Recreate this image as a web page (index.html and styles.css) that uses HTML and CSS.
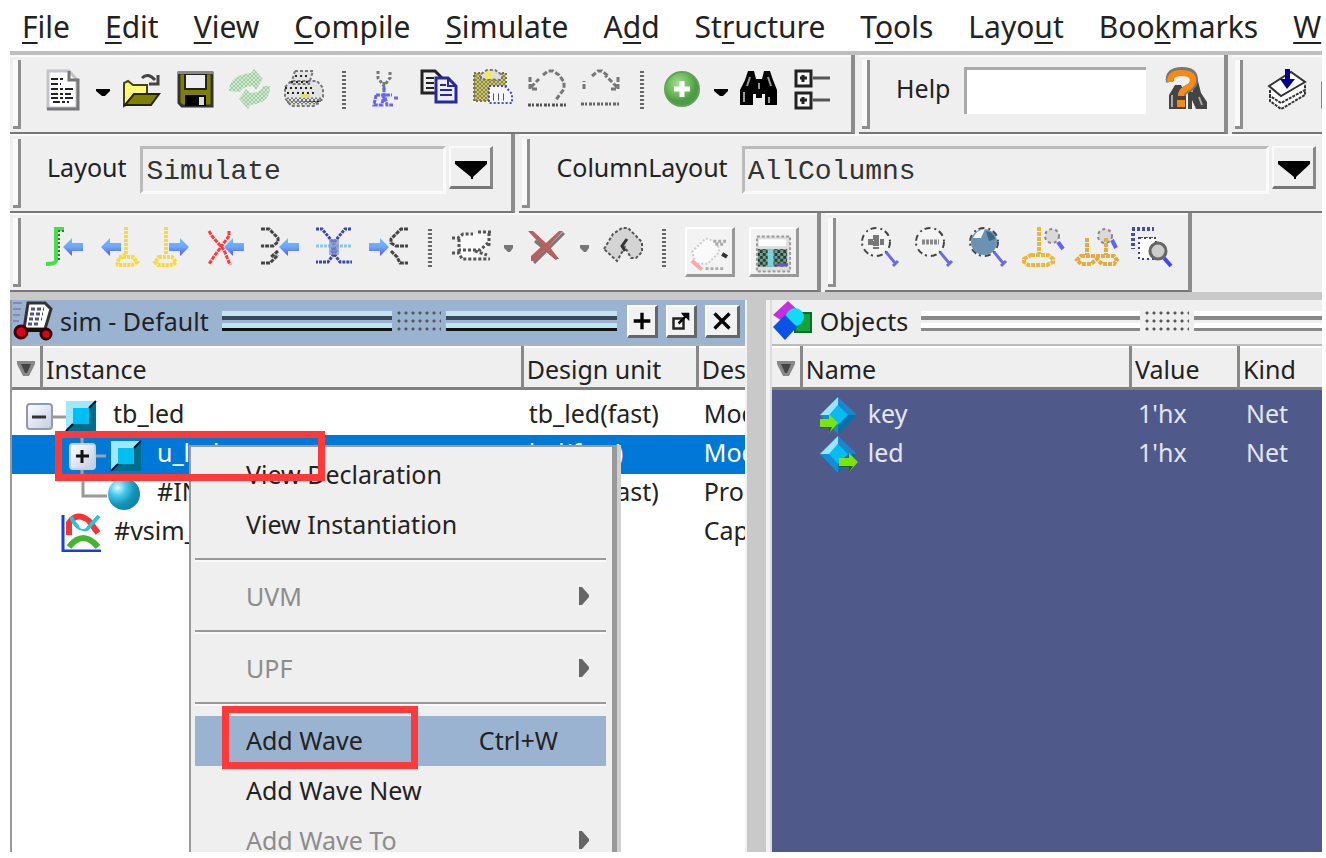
FILE: index.html
```html
<!DOCTYPE html>
<html lang="en">
<head>
<meta charset="utf-8">
<title>Simulator</title>
<link rel="stylesheet" href="styles.css">
</head>
<body>
<svg class="defs" aria-hidden="true">
  <defs>
    <pattern id="dither" width="4" height="4" patternUnits="userSpaceOnUse"><path d="M0 0h2v2H0zM2 2h2v2H2z" fill="#777"/></pattern>
    <pattern id="ditherOlive" width="4" height="4" patternUnits="userSpaceOnUse"><path fill="#c9c36a" d="M0 0h4v4H0z"/><path d="M0 0h2v2H0zM2 2h2v2H2z" fill="#8d8a4a"/></pattern>
    <pattern id="ditherGreen" width="4" height="4" patternUnits="userSpaceOnUse"><path fill="#cfe6cf" d="M0 0h4v4H0z"/><path d="M0 0h2v2H0zM2 2h2v2H2z" fill="#a4cfa6"/></pattern>
    <pattern id="ditherTeal" width="6" height="6" patternUnits="userSpaceOnUse"><path fill="#6fa08a" d="M0 0h6v6H0z"/><path d="M0 0h3v3H0zM3 3h3v3H3z" fill="#2c3b3c"/></pattern>
    <linearGradient id="blueArrow" x2="0" y2="1"><stop offset="0" stop-color="#6fc0f7"/><stop offset=".5" stop-color="#6ba6fb"/><stop offset="1" stop-color="#5a50f5"/></linearGradient>
    <radialGradient id="greenBall" cx=".4" cy=".35"><stop offset="0" stop-color="#a9dc98"/><stop offset=".7" stop-color="#67b957"/><stop offset="1" stop-color="#4f9a48"/></radialGradient>
    <radialGradient id="ball" cx=".3" cy=".3" r=".75"><stop offset="0" stop-color="#e2fbff"/><stop offset=".35" stop-color="#45c8ee"/><stop offset=".7" stop-color="#1593b8"/><stop offset="1" stop-color="#0e86a8"/></radialGradient>
    <linearGradient id="box" x2="1" y2="1"><stop offset="0" stop-color="#fff"/><stop offset="1" stop-color="#c3cbe0"/></linearGradient>
    <g id="arrowLeft"><path d="M0 10 9 1v5h11v8H9v5z" fill="url(#blueArrow)"/></g>
    <g id="arrowRight"><path d="M20 10 11 1v5H0v8h11v5z" fill="url(#blueArrow)"/></g>
    <g id="cube"><path fill="#9fe8f8" d="M0 0h30l-7 7H7v16l-7 7z"/><path fill="#006d8c" d="M30 0v30H0l7-7h16V7z"/><path fill="#00bff2" d="M7 7h16v16H7z"/><path d="M30 0l-7 7M7 23l-7 7" stroke="#013" stroke-width="2"/></g>
    <g id="gem"><path fill="#98e6fa" d="M18 0 0 18l10 0 8-10z"/><path fill="#1b86cf" d="M18 0l19 18H27L18 8z"/><path fill="#0a6fae" d="M37 18 18 37V27l9-9z"/><path fill="#128ed4" d="M0 18l18 19V27l-8-9z"/><path fill="#05bdf3" d="M18 8l10 10-10 10L9 18z"/></g>
    <g id="lens"><circle cx="16" cy="15" r="14" fill="#f4f4f4" stroke="#444" stroke-width="2" stroke-dasharray="6 4 2 3"/><path d="m26 25 9 11m-2 3 5-5" stroke="#6d6dd8" stroke-width="3" fill="none"/></g>
  </defs>
</svg>

<div class="app">
  <nav class="menubar" aria-label="Main">
    <a href="#"><u>F</u>ile</a><a href="#"><u>E</u>dit</a><a href="#"><u>V</u>iew</a><a href="#"><u>C</u>ompile</a><a href="#"><u>S</u>imulate</a><a href="#">A<u>d</u>d</a><a href="#">St<u>r</u>ucture</a><a href="#">T<u>o</u>ols</a><a href="#">Layo<u>u</u>t</a><a href="#">Boo<u>k</u>marks</a><a href="#"><u>W</u>indow</a>
  </nav>

  <div class="bars">
    <div class="bar-row">
      <section class="bar">
        <i class="grip"></i>
        <div class="tools">
          <button class="tool" aria-label="New"><svg viewBox="0 0 40 42"><path fill="#fff" stroke="#c4c2cc" stroke-width="3" d="M3 2h21l8 9v28H3z"/><path fill="none" stroke="#777" stroke-width="3" d="M24 2v9h9v29H2"/><path stroke="#222" stroke-width="2" stroke-dasharray="7 2 3 2 9 2" d="M6 10h13M6 15h10M6 20h22M6 25h20M6 29h22M8 33h16"/></svg></button>
          <button class="drop" aria-label="New options"><svg viewBox="0 0 14 42"><path d="M0 20h14v2l-5 5H6l-6-5z"/></svg></button>
          <button class="tool" aria-label="Open"><svg viewBox="0 0 40 42"><path d="M21 9q6-6 13 2m3-5v9h-9" fill="none" stroke="#444" stroke-width="3"/><path fill="#fff977" stroke="#444416" stroke-width="2" d="M3 37V14l4-2 5 4h14v8z"/><path fill="#808000" stroke="#222200" stroke-width="2" d="M4 36l9-11h25l-8 11z"/></svg></button>
          <button class="tool" aria-label="Save"><svg viewBox="0 0 40 42"><path fill="#808000" stroke="#333" stroke-width="3" d="M4 4h33v33H7l-3-3z"/><path fill="#efefef" stroke="#222" stroke-width="2" d="M10 5h21v15H10z"/><path d="M10 26h21v11H10z"/><path fill="#ddd" d="M24 28h5v8h-5z"/><path fill="#888" d="M3 2h35v3H3z"/></svg></button>
          <button class="tool" aria-label="Reload"><svg viewBox="0 0 40 42"><path fill="url(#ditherGreen)" d="M0 22Q0 6 22 4l3-4 9 10-7 11-3-4q-10 0-13 6zM41 17q1 17-20 19l-2 4-9-10 7-10 4 4q11 0 13-7z"/></svg></button>
          <button class="tool" aria-label="Print"><svg viewBox="0 0 40 42"><path fill="#e3e3e3" stroke="#777" stroke-width="2" stroke-dasharray="3 2" d="M12 2h18l-4 13H8zM2 18l6-6h26l6 7v9l-8 9H8l-6-8z"/><path stroke="#222" stroke-width="2" stroke-dasharray="2 3" d="M2 19h30M4 24h28M8 13h18M12 7h14"/><path stroke="url(#dither)" stroke-width="7" d="M4 32h32l0 1"/><path fill="#e3dc75" d="M18 25h9v4h-9z"/></svg></button>
          <i class="sep"></i>
          <button class="tool" aria-label="Cut"><svg viewBox="0 0 40 42"><path d="M13 2v7l6 8 6-8V2M19 13v8" fill="none" stroke="#777" stroke-width="3" stroke-dasharray="3 2"/><path d="M19 19v14M11 26h16M11 26l-2 10h8l2-12 3 12h6M29 29h4" fill="none" stroke="#6666f5" stroke-width="3" stroke-dasharray="4 1"/></svg></button>
          <button class="tool" aria-label="Copy"><svg viewBox="0 0 40 42"><path fill="#eee" stroke="#222" stroke-width="3" d="M3 2h13l7 7v15H3z"/><path stroke="#222" stroke-width="2" d="M7 9h8M7 14h8M7 19h8"/><path fill="#eef" stroke="#2828a0" stroke-width="3" d="M17 9h12l8 8v16H17z"/><path fill="none" stroke="#2828a0" stroke-width="2" d="M29 9v8h8M21 16h6M21 21h12M21 26h12"/></svg></button>
          <button class="tool" aria-label="Paste"><svg viewBox="0 0 40 42"><path fill="url(#ditherOlive)" stroke="#77744a" stroke-width="2" stroke-dasharray="2 2" d="M1 4h32v28H1z"/><path fill="#ddd" stroke="#777" stroke-width="2" stroke-dasharray="3 2" d="M8 10V5l6-4h8l7 5v5z"/><path fill="#f3ec4e" d="M12 3h6v7h-6z"/><path fill="#f6f6ff" stroke="#4a4ab8" stroke-width="2" stroke-dasharray="2 2" d="M16 17h16l7 8v9H16z"/><path stroke="#555" stroke-width="7" stroke-dasharray="1 4" d="M20 28h14"/></svg></button>
          <button class="tool" aria-label="Undo"><svg viewBox="0 0 40 42"><path d="M3 8v12h8M4 18l8-8M16 6l5-4h5l6 4 5 7v7l-9 12" fill="none" stroke="#777" stroke-width="3" stroke-dasharray="5 2"/><path d="M1 36h38" stroke="#555" stroke-width="3" stroke-dasharray="3 1 2 2"/></svg></button>
          <button class="tool" aria-label="Redo"><svg viewBox="0 0 40 42"><path d="M37 8v12h-9M36 18 24 6M3 20v-8M11 7l6-5h4l6 5" fill="none" stroke="#777" stroke-width="3" stroke-dasharray="5 2"/><path d="M0 35h40" stroke="#666" stroke-width="3" stroke-dasharray="3 1 2 2"/></svg></button>
          <i class="sep"></i>
          <button class="tool" aria-label="Add"><svg viewBox="0 0 40 42"><circle cx="19" cy="20" r="17" fill="url(#greenBall)" stroke="#5fa558" stroke-width="2"/><path stroke="#fff" stroke-width="5" d="M11 20h16M19 12v16"/></svg></button>
          <button class="drop" aria-label="Add options"><svg viewBox="0 0 14 42"><path d="M0 20h14v2l-5 5H6l-6-5z"/></svg></button>
          <button class="tool" aria-label="Find"><svg viewBox="0 0 40 42"><path d="M9 2h6l2 8h6l2-8h6l3 9 4 10v15H26V25h-3v4h-6v-4h-3v11H1V21l5-10z"/><path stroke="#999" stroke-width="2" d="M11 8l-3 9M5 23v10M29 8l3 9M30 28v6M20 14v6"/></svg></button>
          <button class="tool" aria-label="Expand tree"><svg viewBox="0 0 40 42"><g fill="#f6f6f6" stroke="#222" stroke-width="3"><path d="M3 2h15v15H3z"/><path d="M3 24h15v15H3z"/></g><path stroke="#222" stroke-width="3" d="M7 9h7M10 6v7M7 31h7M10 28v7"/><path stroke="#555" stroke-width="3" d="M20 9h17M20 31h17"/></svg></button>
        </div>
      </section>
      <section class="bar">
        <i class="grip"></i>
        <div class="fields">
          <label for="help">Help</label>
          <input id="help" class="help" type="text">
          <button class="tool" aria-label="Search help"><svg viewBox="0 0 40 42"><path fill="#444" d="M3 40V26l6-10h6l5 10v14zM22 40V24l3-16h6l4 16 6 9v7H30l-4-9v9z"/><path stroke="#aaa" stroke-width="2" d="M6 26v12M26 15v8M33 28l3 8"/><path d="M4 13q-2-11 12-11 12 0 12 9 0 6-7 9-5 2-5 7" fill="none" stroke="#777" stroke-width="8"/><path d="M4 13q0-9 11-9 12 0 12 7 0 5-6 8-6 3-6 8" fill="none" stroke="#f78b12" stroke-width="6"/><path fill="#f78b12" d="M11 31h8v7h-8z"/></svg></button>
        </div>
      </section>
      <section class="bar bar-last">
        <i class="grip"></i>
        <div class="tools">
          <button class="tool" aria-label="Compile"><svg viewBox="0 0 40 42"><path fill="#fff" stroke="#333" stroke-width="2" stroke-dasharray="3 1" d="M3 26v6l11 8 24-14v-5M3 21v6l11 7 24-13v-6"/><path fill="#fff" stroke="#333" stroke-width="2" d="M2 17 24 3l14 10-24 14z"/><path fill="#000090" d="M18 0h5v10h5l-8 10-7-10h5z"/></svg></button>
          <button class="tool" aria-label="Compile all"><svg viewBox="0 0 40 42"><path fill="#6060c8" d="M4 0h12v10H4z"/><path fill="#fff" stroke="#222" stroke-width="3" d="M2 14h30v24H2z"/></svg></button>
        </div>
      </section>
    </div>

    <div class="bar-row">
      <section class="bar">
        <i class="grip"></i>
        <div class="fields">
          <label for="layout">Layout</label>
          <select id="layout" class="combo"><option>Simulate</option></select>
          <button class="open" aria-label="Choose layout"><svg viewBox="0 0 34 20"><path d="M1 1h32v3L19 17v2h-2v-2L1 4z"/></svg></button>
        </div>
      </section>
      <section class="bar bar-last">
        <i class="grip"></i>
        <div class="fields fields-wide">
          <label for="columns">ColumnLayout</label>
          <select id="columns" class="combo combo-wide"><option>AllColumns</option></select>
          <button class="open" aria-label="Choose column layout"><svg viewBox="0 0 34 20"><path d="M1 1h32v3L19 17v2h-2v-2L1 4z"/></svg></button>
        </div>
      </section>
    </div>

    <div class="bar-row">
      <section class="bar">
        <i class="grip"></i>
        <div class="tools">
          <button class="tool" aria-label="Add edge"><svg viewBox="0 0 40 42"><path d="M19 2h-8v32q0 3-10 3" fill="none" stroke="#44e044" stroke-width="4"/><path d="M19 4h-5v30" fill="none" stroke="#2c7a35" stroke-width="2" stroke-dasharray="2 2"/><use href="#arrowLeft" x="18" y="10"/></svg></button>
          <button class="tool" aria-label="Previous edge"><svg viewBox="0 0 40 42"><use href="#arrowLeft" x="2" y="10"/><path d="M27 0v29M20 30h14l4 5-5 3H19q-3-4 8-11" fill="none" stroke="#f8d93e" stroke-width="4" stroke-dasharray="3 1"/></svg></button>
          <button class="tool" aria-label="Next edge"><svg viewBox="0 0 40 42"><use href="#arrowRight" x="16" y="10"/><path d="M13 0v28M6 30h13l4 5-3 3H5l-3-3z" fill="none" stroke="#f8d93e" stroke-width="4" stroke-dasharray="3 1"/></svg></button>
          <button class="tool" aria-label="Delete edge"><svg viewBox="0 0 40 42"><path d="M2 4l3 5 12 14 6 15M22 4v5L8 28 2 37" fill="none" stroke="#f93c3c" stroke-width="3" stroke-dasharray="4 1"/><use href="#arrowLeft" x="17" y="10"/></svg></button>
          <button class="tool" aria-label="Join signals"><svg viewBox="0 0 40 42"><path d="M0 2h8l9 9v4l-5 4H0M17 24l-7 6M0 36h9l8-8" fill="none" stroke="#444" stroke-width="3" stroke-dasharray="4 1"/><use href="#arrowLeft" x="18" y="10"/></svg></button>
          <button class="tool" aria-label="Cross signals"><svg viewBox="0 0 40 42"><path d="M1 2h6l10 12 4 10-8 11H1M36 2h-6L20 14l-3 10 8 11h12" fill="none" stroke="#3a46a8" stroke-width="3" stroke-dasharray="3 1"/><path d="M1 19h36" stroke="#8cc7e8" stroke-width="3" stroke-dasharray="3 1"/><path fill="#8090cc" d="M14 12h10v16H14z" opacity=".7"/></svg></button>
          <button class="tool" aria-label="Split signals"><svg viewBox="0 0 40 42"><use href="#arrowRight" x="0" y="10"/><path d="M39 2h-7L22 12v4l5 3h12M22 24l6 6 3 6h8" fill="none" stroke="#444" stroke-width="3" stroke-dasharray="4 1"/></svg></button>
          <i class="sep"></i>
          <button class="tool" aria-label="Edit wave"><svg viewBox="0 0 40 42"><path fill="#fafafa" d="M10 7 36 6v14L26 32H10z"/><path d="M1 11h6l5-4h10M27 5h13M8 12v11h21l8-7M1 26h7l3 6h28M38 6v14M24 24l12 4" fill="none" stroke="#555" stroke-width="3" stroke-dasharray="3 2"/></svg></button>
          <button class="drop" aria-label="Edit options"><svg viewBox="0 0 14 42"><path fill="#777" d="M2 18h9v3l-3 4H6l-4-4z"/></svg></button>
          <button class="tool" aria-label="Delete"><svg viewBox="0 0 40 42"><path d="M37 6 7 36M8 14l22 18" fill="none" stroke="#777" stroke-width="3"/><path fill="#b86060" d="M1 4h5l13 12L32 4h4L22 19l10 13h-4L18 23 8 34H4v-5l11-10z"/></svg></button>
          <button class="drop" aria-label="Delete options"><svg viewBox="0 0 14 42"><path fill="#777" d="M2 18h9v3l-3 4H6l-4-4z"/></svg></button>
          <button class="tool" aria-label="Refresh waves"><svg viewBox="0 0 40 42"><path fill="#d4d4d4" stroke="#555" stroke-width="2" stroke-dasharray="3 2" d="M1 22l9-15 9-6h6l7 7 7 7v10l-6 6h-5l-6-11-8 14z"/><path d="M24 12l-5 7 3 5" fill="none" stroke="#333" stroke-width="3"/></svg></button>
          <i class="sep"></i>
          <button class="tool raised" aria-label="Analyze"><svg viewBox="0 0 40 42"><path fill="#fafafa" stroke="#ccc" stroke-width="2" stroke-dasharray="2 2" d="M2 20 16 6l12 4 2 10-12 12H6z"/><path stroke="#f3aaaa" stroke-width="4" d="M2 29l10 9"/><path stroke="#aaa" stroke-width="3" stroke-dasharray="3 2" d="M24 9h14M16 37h20M26 12h8"/><path stroke="#333" stroke-width="4" d="M33 22l5 3"/></svg></button>
          <button class="tool raised" aria-label="Calculator"><svg viewBox="0 0 40 42"><path fill="#ddd" stroke="#999" stroke-width="2" stroke-dasharray="3 2" d="M3 4h34v36H3z"/><path fill="#fff" d="M5 7h28v7H5z"/><path fill="url(#ditherTeal)" d="M4 17h30v18H4z"/><path fill="#77d4de" d="M14 17h6v18h-6z"/><path stroke="#6a55c8" stroke-width="3" d="M23 33h12"/></svg></button>
        </div>
      </section>
      <section class="bar">
        <i class="grip"></i>
        <div class="tools">
          <button class="tool" aria-label="Zoom in"><svg viewBox="0 0 40 42"><use href="#lens"/><path d="M8 15h16M16 8v14" stroke="#777" stroke-width="6" stroke-dasharray="5 1"/></svg></button>
          <button class="tool" aria-label="Zoom out"><svg viewBox="0 0 40 42"><use href="#lens"/><path d="M8 15h17" stroke="#888" stroke-width="5" stroke-dasharray="3 1"/></svg></button>
          <button class="tool" aria-label="Zoom full"><svg viewBox="0 0 40 42"><use href="#lens"/><circle cx="16" cy="15" r="13" fill="#6c92b2"/><path fill="#eef6fa" d="M5 11q3-8 12-9l-4 9z"/><path fill="#37698d" d="M18 4q8 1 9 8l-6 2z"/></svg></button>
          <button class="tool" aria-label="Zoom cursor"><svg viewBox="0 0 40 42"><path d="M17 0v27M9 28h17l5 4v3l-6 3H6l-4-3v-3z" fill="none" stroke="#e9b93c" stroke-width="4" stroke-dasharray="4 1"/><circle cx="30" cy="9" r="7" fill="#d9d9d9" stroke="#888" stroke-width="2" stroke-dasharray="3 3"/><path d="M36 15l5 7" stroke="#6262f6" stroke-width="4"/></svg></button>
          <button class="tool" aria-label="Zoom between cursors"><svg viewBox="0 0 40 42"><circle cx="29" cy="9" r="7" fill="#d9d9d9" stroke="#888" stroke-width="2" stroke-dasharray="3 3"/><path d="M36 13l4 8" stroke="#6262f6" stroke-width="4"/><path d="M11 11v17M30 11v17M5 29h33l3 4-3 4H26l-5-5-6 5H5l-4-4z" fill="none" stroke="#e0ad3e" stroke-width="4" stroke-dasharray="4 1"/></svg></button>
          <button class="tool" aria-label="Zoom area"><svg viewBox="0 0 40 42"><path fill="none" stroke="#4a4aa8" stroke-width="4" stroke-dasharray="3 2" d="M2 2h22M3 6v16M10 12h16"/><path fill="#fff" stroke="#3b3ba0" stroke-width="2" stroke-dasharray="2 3" d="M9 11h17v21H9z"/><circle cx="28" cy="24" r="8" fill="#ccc" stroke="#666" stroke-width="3"/><path d="M34 31l7 8" stroke="#4545f5" stroke-width="4"/></svg></button>
        </div>
      </section>
    </div>
  </div>

  <main class="workspace">
    <section class="panel sim">
      <header class="title">
        <svg class="title-icon" viewBox="0 0 40 40"><path d="M1 2h9M1 8h8M1 14h7M1 20h6" stroke="#8d85b5" stroke-width="2"/><path fill="#fff" stroke="#333" stroke-width="3" d="M16 2h17l6 6-6 20H12z"/><path stroke="#55508a" stroke-width="3" stroke-dasharray="4 2" d="M19 8h13M18 13h13M17 18h13M16 23h12"/><path stroke="#111" stroke-width="4" d="M10 29h24"/><circle cx="9" cy="31" r="6" fill="#e00020" stroke="#400" stroke-width="3"/><circle cx="34" cy="33" r="5" fill="#e00020" stroke="#300" stroke-width="3"/></svg>
        <span class="title-text">sim - Default</span>
        <i class="rule"></i><i class="dots"></i><i class="rule"></i>
        <span class="title-buttons">
          <button aria-label="Maximize"><svg viewBox="0 0 24 24"><path d="M2 12h20M12 2v20" stroke="#000" stroke-width="4"/></svg></button>
          <button aria-label="Undock"><svg viewBox="0 0 24 24"><path d="M3 9h12v12H3z" fill="none" stroke="#222" stroke-width="3"/><path d="M9 15 19 5" stroke="#000" stroke-width="3"/><path d="M12 2h10v10l-4-4-4-3z"/></svg></button>
          <button class="close" aria-label="Close"><svg viewBox="0 0 24 24"><path d="M3 3l18 18M21 3 3 21" stroke="#000" stroke-width="4"/></svg></button>
        </span>
      </header>
      <table class="grid">
        <colgroup><col class="c-mark"><col><col class="c-unit"><col class="c-type"></colgroup>
        <thead><tr><th aria-label="Sort"><svg class="mark" viewBox="0 0 18 16"><path fill="#888" d="M0 0h18v3l-6 12H6L0 3z"/><path fill="#444" d="M4 3h10l-4 9H8z"/></svg></th><th>Instance</th><th>Design unit</th><th>Design unit type</th></tr></thead>
        <tbody>
          <tr><td colspan="2"><div class="node"><svg width="101" height="39" viewBox="0 0 101 39"><path d="M40 21h14" stroke="#999" stroke-width="3"/><rect x="15" y="8" width="25" height="25" rx="3" fill="url(#box)" stroke="#8f9bb5" stroke-width="2"/><path d="M20 21h14" stroke="#333" stroke-width="3"/><use href="#cube" x="54" y="5"/></svg>tb_led</div></td><td>tb_led(fast)</td><td>Module</td></tr>
          <tr class="selected"><td colspan="2"><div class="node"><svg width="145" height="39" viewBox="0 0 145 39"><path d="M84 21h10M70 0v39" stroke="#99a3ad" stroke-width="3"/><rect x="58" y="9" width="25" height="25" rx="3" fill="url(#box)" stroke="#c8d0e0" stroke-width="2"/><path d="M64 21h13M70 15v13" stroke="#111" stroke-width="3"/><use href="#cube" x="99" y="6"/></svg>u_led</div></td><td>led(fast)</td><td>Module</td></tr>
          <tr><td colspan="2"><div class="node"><svg width="145" height="39" viewBox="0 0 145 39"><path d="M71 0v22h24" fill="none" stroke="#999" stroke-width="3"/><circle cx="112" cy="20" r="16" fill="url(#ball)"/></svg>#INITIAL#30</div></td><td>tb_led(fast)</td><td>Process</td></tr>
          <tr><td colspan="2"><div class="node"><svg width="102" height="39" viewBox="0 0 102 39"><path fill="none" stroke="#1540e0" stroke-width="3" d="M51 2v36h38"/><path d="M57 22V10q8-12 20-2l9 12" fill="none" stroke="#f23535" stroke-width="6"/><path d="M59 4q6 14 16 12l12-13" fill="none" stroke="#28c4dc" stroke-width="4"/><circle cx="71" cy="12" r="4" fill="#fff"/><path d="M57 34q14-18 29 0" fill="none" stroke="#45b531" stroke-width="6"/></svg>#vsim_capacity#</div></td><td></td><td>Capacity</td></tr>
        </tbody>
      </table>
    </section>

    <div class="splitter"></div>

    <section class="panel objects">
      <header class="title">
        <svg class="title-icon" viewBox="0 0 40 40"><path fill="#c42fe0" d="M16 0l15 14-15 10L1 14z"/><path fill="#15a43c" stroke="#0b6c2a" stroke-width="2" d="M23 12h16v19H23z"/><circle cx="23" cy="16" r="9" fill="#11dcf2"/><path fill="#0b53e6" d="M13 14l12 12-12 13L1 26z"/></svg>
        <span class="title-text">Objects</span>
        <i class="rule"></i><i class="dots"></i><i class="rule rule-end"></i>
      </header>
      <table class="grid">
        <colgroup><col class="c-mark"><col><col class="c-value"><col class="c-kind"></colgroup>
        <thead><tr><th aria-label="Sort"><svg class="mark" viewBox="0 0 18 16"><path fill="#888" d="M0 0h18v3l-6 12H6L0 3z"/><path fill="#444" d="M4 3h10l-4 9H8z"/></svg></th><th>Name</th><th>Value</th><th>Kind</th></tr></thead>
        <tbody>
          <tr><td colspan="2"><div class="node"><svg width="96" height="39" viewBox="0 0 96 39"><use href="#gem" x="48" y="1"/><path fill="#7be50b" d="M48 23h9v-5l9 9-9 10v-5h-9z"/><path fill="#1c6410" d="M48 31h12l-3 6v-5h-9z"/></svg>key</div></td><td>1'hx</td><td>Net</td></tr>
          <tr><td colspan="2"><div class="node"><svg width="96" height="39" viewBox="0 0 96 39"><use href="#gem" x="48" y="1"/><path fill="#7be50b" d="M67 23h10v-5l9 9-9 10v-5H67z"/><path fill="#1c6410" d="M67 31h14l-4 6v-5H67z"/></svg>led</div></td><td>1'hx</td><td>Net</td></tr>
        </tbody>
      </table>
    </section>

    <div class="context" role="menu">
      <button role="menuitem">View Declaration</button>
      <button role="menuitem">View Instantiation</button>
      <hr>
      <button role="menuitem" disabled>UVM<svg viewBox="0 0 10 18"><path d="M0 0h3l7 8v2l-7 8H0z"/></svg></button>
      <hr>
      <button role="menuitem" disabled>UPF<svg viewBox="0 0 10 18"><path d="M0 0h3l7 8v2l-7 8H0z"/></svg></button>
      <hr>
      <button role="menuitem" class="active">Add Wave<kbd>Ctrl+W</kbd><i class="callout callout-item"></i></button>
      <button role="menuitem">Add Wave New</button>
      <button role="menuitem" disabled>Add Wave To<svg viewBox="0 0 10 18"><path d="M0 0h3l7 8v2l-7 8H0z"/></svg></button>
    </div>
    <i class="callout callout-row"></i>
  </main>
</div>
</body>
</html>
```
FILE: styles.css
```css
* { box-sizing: border-box; }
body { margin: 0; background: #fff; color: #222; font: 25px/1.2 "Noto Sans", sans-serif; }
button { margin: 0; padding: 0; border: 0; background: none; font: inherit; color: inherit; }
svg { display: block; flex: none; overflow: visible; }
.defs { position: absolute; width: 0; height: 0; }

.app { display: flex; flex-direction: column; height: calc(100vh - 6px); margin: 0 4px 6px 10px; overflow: hidden; }

.menubar { display: flex; gap: 35px; flex: none; height: 51px; padding: 9px 12px 0; overflow: hidden; font-size: 30px; line-height: 36px; }
.menubar a { flex: none; color: #222; text-decoration: none; }
.menubar u { text-decoration-thickness: 2px; text-underline-offset: 4px; text-decoration-skip-ink: none; }

/* Toolbars */
.bars { flex: none; border-top: 4px solid #bfbfbf; background: #efefef; }
.bar-row { display: flex; gap: 4px; height: 79px; }
.bar { display: flex; flex: none; padding-left: 3px; border-right: 4px solid #8c8c8c; border-bottom: 2px solid #777; box-shadow: inset 0 2px #fafafa; background: #efefef; }
.bar-last { flex: 1 1 0; min-width: 0; border-right: 0; overflow: hidden; }
.grip { flex: none; width: 8px; margin: 5px 0 3px; border: solid #8e8e8e; border-width: 0 3px 3px 0; background: #fafafa; }
.tools { display: flex; align-items: flex-start; gap: 14px; padding: 14px 18px 0 24px; }
.tool { flex: none; width: 40px; height: 42px; }
.tool svg, .drop svg { width: 100%; height: 42px; }
.drop { flex: none; width: 14px; height: 42px; margin: 0 -3px; }
.sep { flex: none; width: 4px; height: 38px; margin: 2px 5px; background: repeating-linear-gradient(#666 0 2px, #efefef 2px 4px); }
.raised { width: 50px; height: 50px; padding: 3px; background: #f3f3f3; border: solid #fff; border-width: 2px; border-right: 3px solid #999; border-bottom: 3px solid #999; }
.fields { display: flex; align-items: flex-start; padding: 12px 18px 0 26px; }
.fields label { height: 42px; margin-right: 14px; line-height: 42px; }
.help { width: 182px; height: 47px; margin-right: 20px; border: 0; border-top: 3px solid #aaa; border-left: 3px solid #aaa; background: #fff; font: inherit; }
.help + .tool { margin-top: 2px; }
.help, .combo { border-radius: 0; outline: 0; }
.combo { width: 306px; height: 48px; padding: 4px 0 0 3px; appearance: none; border: 3px solid #fafafa; border-top-color: #bbb; border-left-color: #bbb; background: #efefef; color: #333; font: 28px/36px "Liberation Mono", monospace; }
.open { display: grid; place-items: center; flex: none; width: 44px; height: 43px; margin-left: 3px; padding-top: 6px; border: 2px solid #fafafa; border-right: 3px solid #888; border-bottom: 3px solid #777; }
.open svg { width: 34px; height: 20px; }
.fields-wide { flex: 1; min-width: 0; padding-right: 6px; }
.combo-wide { flex: 1; width: auto; min-width: 0; }

/* Panels */
.workspace { position: relative; display: flex; flex: 1; min-height: 0; border-top: 8px solid #c9c9c9; background: #ccc; }
.panel { flex: 735 1 0; min-width: 0; overflow: hidden; background: #fff; border-left: 2px solid #999; }
.objects { flex-grow: 552; background: #505a8a; border-left-color: #ddd; }
.splitter { flex: none; width: 25px; border: solid #f2f2f2; border-width: 0 4px 0 2px; background: #c9c9c9; }
.title { display: flex; align-items: center; height: 46px; padding-bottom: 2px; border-bottom: 2px solid #bbb; background: #efefef; }
.sim .title { background: #9ab3d0; border-color: #a9b4c0; }
.title-icon { width: 40px; height: 40px; }
.title-text { flex: none; padding: 0 13px 0 8px; }
.rule { flex: 218 1 0; height: 20px; border: solid #888; border-width: 0 0 3px; background: linear-gradient(#fff 0 5px, #888 5px 9px, #efefef 9px 12px, #fff 12px); }
.rule-end { flex-grow: 127; }
.sim .rule { border-color: #111; background: linear-gradient(#bfe4f0 0 5px, #38475a 5px 9px, #9ab3d0 9px 12px, #bfe4f0 12px); }
.dots { flex: none; width: 44px; height: 20px; margin: 0 5px; background: radial-gradient(circle at 2px 2px, #555 0 1px, transparent 2px) 0 0 / 7px 8px; }
.title-buttons { display: flex; gap: 8px; padding: 0 5px 0 10px; }
.title-buttons button { display: grid; place-items: center; width: 31px; height: 33px; border: 2px solid #fff; border-right: 3px solid #666; border-bottom: 3px solid #666; background: #f2f2f2; }
.title-buttons .close { width: 35px; }
.title-buttons svg { width: 20px; height: 22px; }

.grid { width: 100%; table-layout: fixed; border-collapse: separate; border-spacing: 0; }
.grid th, .grid td { height: 39px; overflow: hidden; text-align: left; font-weight: 400; white-space: nowrap; line-height: 34px; }
.grid td { padding: 0 0 5px 6px; }
.grid th { height: 44px; padding: 4px 0 0 3px; border-right: 3px solid #888; border-bottom: 3px solid #808080; background: #efefef; box-shadow: inset 0 2px #fff; }
.grid th:last-child { border-right: 0; }
.grid td[colspan] { padding: 0; }
.grid tbody::before { content: ""; display: block; height: 6px; }
.c-mark { width: 31px; }
.c-unit { width: 175px; }
.c-type { width: 46px; }
.c-value { width: 108px; }
.c-kind { width: 82px; }
.sim td + td { padding-left: 5px; }
.mark { width: 18px; height: 16px; margin-left: 2px; }
.node { display: flex; align-items: flex-start; height: 39px; overflow: hidden; }
.selected td { background: #0078d7; color: #fff; }
.objects td { color: #e4e6f0; }

/* Context menu, opened over the instance tree */
.context { position: absolute; left: 179px; top: 145px; width: 428px; padding: 3px 6px 0 4px; border: 2px solid #999; border-right: 5px solid #999; background: #efefef; box-shadow: 4px 0 #d0d0d0; }
.context button { position: relative; display: flex; align-items: center; width: 100%; height: 50px; padding: 0 17px 2px 51px; text-align: left; }
.context button:disabled { color: #8c8c8c; }
.context svg { width: 10px; height: 18px; margin-left: auto; fill: #666; }
.context hr { height: 22px; margin: 0; border: 0; background: linear-gradient(transparent 8px, #999 8px 10px, #fafafa 10px 12px, transparent 12px); }
.context .active { background: #9ab3d0; }
kbd { margin-left: auto; margin-right: 31px; font: inherit; }
.callout { position: absolute; border: 7px solid #fc3a3a; pointer-events: none; }
.callout-item { left: 27px; top: -10px; width: 196px; height: 63px; }
.callout-row { left: 45px; top: 131px; width: 270px; height: 50px; }
```
